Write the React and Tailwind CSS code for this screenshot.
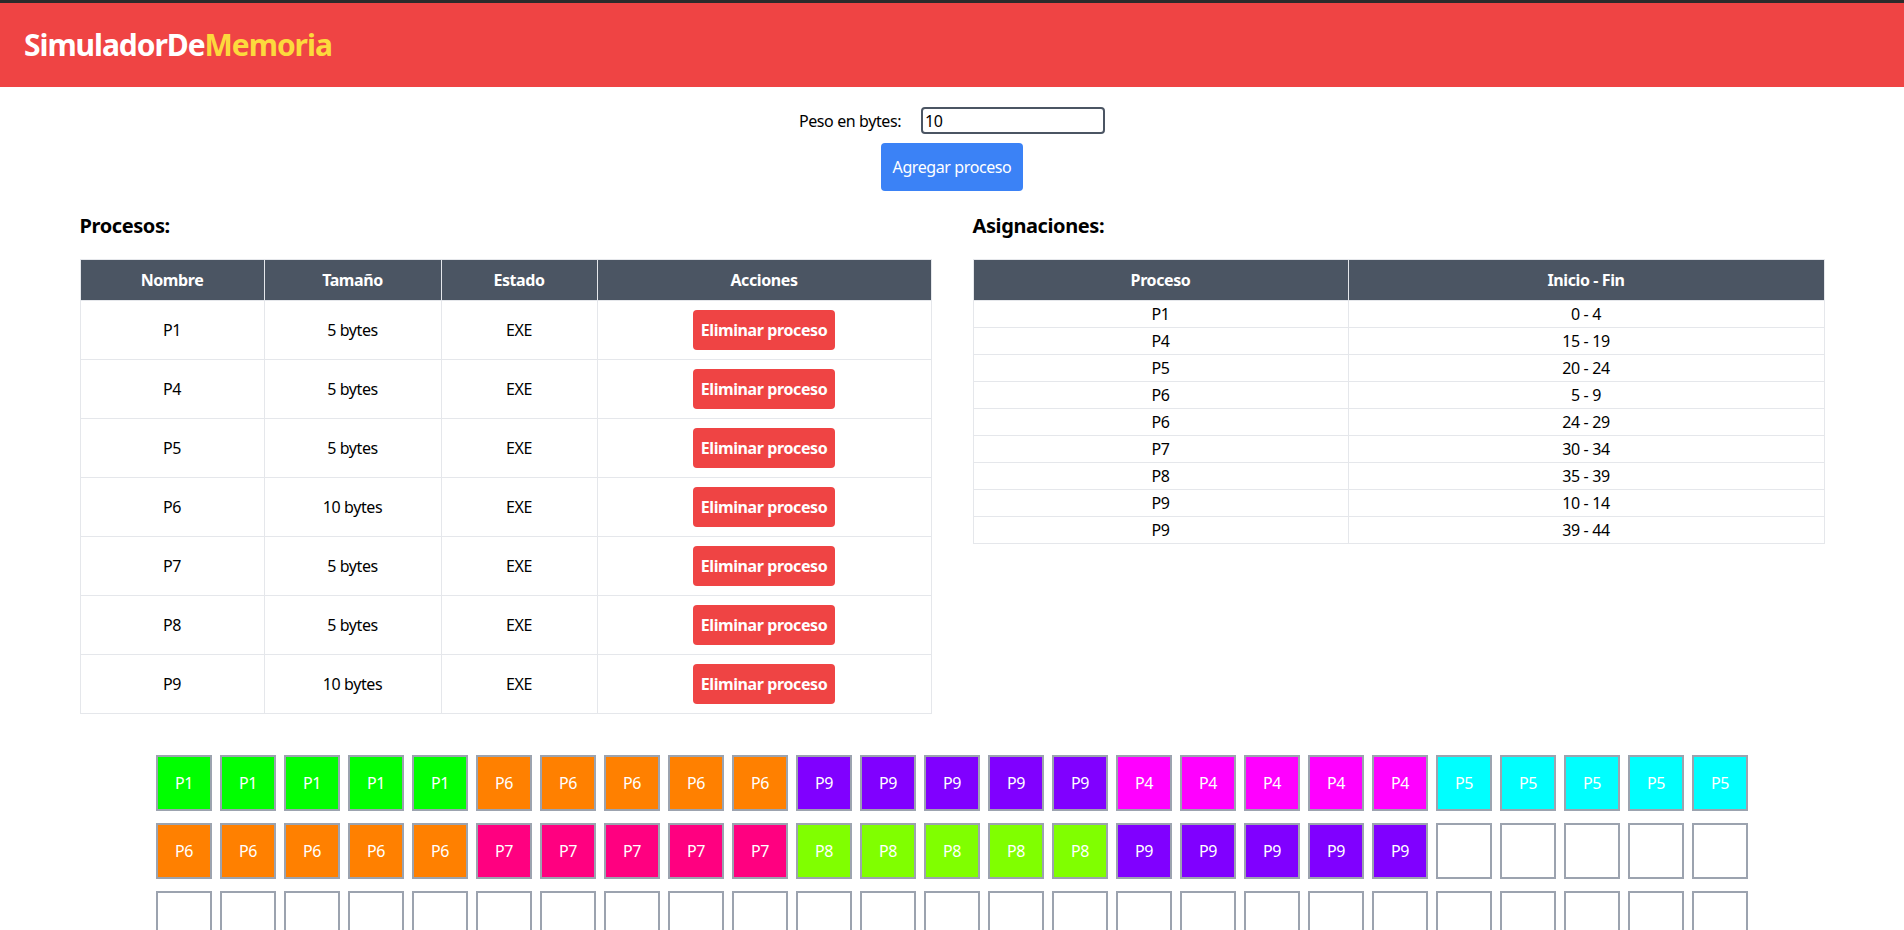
import React, { useState } from 'react';

// Process list shown in the left table
const procesos = [
  { nombre: 'P1', tam: 5 },
  { nombre: 'P4', tam: 5 },
  { nombre: 'P5', tam: 5 },
  { nombre: 'P6', tam: 10 },
  { nombre: 'P7', tam: 5 },
  { nombre: 'P8', tam: 5 },
  { nombre: 'P9', tam: 10 },
];

const asignaciones = [
  ['P1', '0 - 4'],
  ['P4', '15 - 19'],
  ['P5', '20 - 24'],
  ['P6', '5 - 9'],
  ['P6', '24 - 29'],
  ['P7', '30 - 34'],
  ['P8', '35 - 39'],
  ['P9', '10 - 14'],
  ['P9', '39 - 44'],
];

// one class per process, written out in full so tailwind picks them up
const colores = {
  P1: 'bg-[#00ff00]',
  P4: 'bg-[#ff00ff]',
  P5: 'bg-[#00ffff]',
  P6: 'bg-[#ff8000]',
  P7: 'bg-[#ff0080]',
  P8: 'bg-[#80ff00]',
  P9: 'bg-[#8000ff]',
};

// memory cells in order, null = free
const memoria = [
  ...Array(5).fill('P1'),
  ...Array(5).fill('P6'),
  ...Array(5).fill('P9'),
  ...Array(5).fill('P4'),
  ...Array(5).fill('P5'),
  ...Array(5).fill('P6'),
  ...Array(5).fill('P7'),
  ...Array(5).fill('P8'),
  ...Array(5).fill('P9'),
  ...Array(55).fill(null),
];

export default function App() {
  const [peso, setPeso] = useState('10');

  return (
    <div className="min-h-screen bg-white text-black font-['Noto_Sans','Open_Sans',sans-serif] tracking-[-0.025em]">
      <div className="h-[3px] bg-[#2b2b2b]" />
      <header className="bg-[#ef4444] px-6 py-6">
        <h1 className="text-3xl font-bold leading-9 tracking-[-0.035em] text-white">
          SimuladorDe<span className="text-[#fcd93d]">Memoria</span>
        </h1>
      </header>

      {/* Formulario */}
      <div className="mt-5 flex items-center justify-center gap-5">
        <label className="text-base">Peso en bytes:</label>
        <input
          value={peso}
          onChange={(e) => setPeso(e.target.value)}
          className="h-[27px] w-[184px] rounded-sm border-2 border-[#4b5563] px-0.5 text-base outline-none"
        />
      </div>
      <div className="mt-[9px] flex justify-center">
        <button className="rounded-sm bg-[#3b82f6] px-3 py-3 text-base leading-6 text-white">
          Agregar proceso
        </button>
      </div>

      <div className="mt-[21px] flex justify-center gap-[41px]">
        {/* Procesos */}
        <div className="w-[852px]">
          <h2 className="text-xl font-bold leading-7">Procesos:</h2>
          <table className="mt-[19px] w-full border-collapse border border-[#e5e7eb] text-center">
            <thead>
              <tr className="bg-[#4b5563] text-white">
                <th className="w-[184px] border border-[#e5e7eb] py-2 font-bold">Nombre</th>
                <th className="w-[177px] border border-[#e5e7eb] py-2 font-bold">Tamaño</th>
                <th className="w-[156px] border border-[#e5e7eb] py-2 font-bold">Estado</th>
                <th className="border border-[#e5e7eb] py-2 font-bold">Acciones</th>
              </tr>
            </thead>
            <tbody>
              {procesos.map((p) => (
                <tr key={p.nombre}>
                  <td className="border border-[#e5e7eb] py-[9px]">{p.nombre}</td>
                  <td className="border border-[#e5e7eb] py-[9px]">{p.tam} bytes</td>
                  <td className="border border-[#e5e7eb] py-[9px]">EXE</td>
                  <td className="border border-[#e5e7eb] py-[9px]">
                    <button className="rounded-sm bg-[#ef4444] px-2 py-2 font-bold leading-6 text-white">
                      Eliminar proceso
                    </button>
                  </td>
                </tr>
              ))}
            </tbody>
          </table>
        </div>

        {/* Asignaciones */}
        <div className="w-[852px]">
          <h2 className="text-xl font-bold leading-7">Asignaciones:</h2>
          <table className="mt-[19px] w-full border-collapse border border-[#e5e7eb] text-center">
            <thead>
              <tr className="bg-[#4b5563] text-white">
                <th className="w-[375px] border border-[#e5e7eb] py-2 font-bold">Proceso</th>
                <th className="border border-[#e5e7eb] py-2 font-bold">Inicio - Fin</th>
              </tr>
            </thead>
            <tbody>
              {asignaciones.map(([n, r], i) => (
                <tr key={i}>
                  <td className="border border-[#e5e7eb] py-px leading-6">{n}</td>
                  <td className="border border-[#e5e7eb] py-px leading-6">{r}</td>
                </tr>
              ))}
            </tbody>
          </table>
        </div>
      </div>

      {/* Memoria */}
      <div className="mx-auto mt-[41px] grid w-fit grid-cols-[repeat(25,56px)] gap-x-2 gap-y-3 pb-8">
        {memoria.map((p, i) => (
          <div
            key={i}
            className={`flex h-14 w-14 items-center justify-center border-2 border-[#9ca3af] text-base text-white ${
              p ? colores[p] : 'bg-white'
            }`}
          >
            {p}
          </div>
        ))}
      </div>
    </div>
  );
}
